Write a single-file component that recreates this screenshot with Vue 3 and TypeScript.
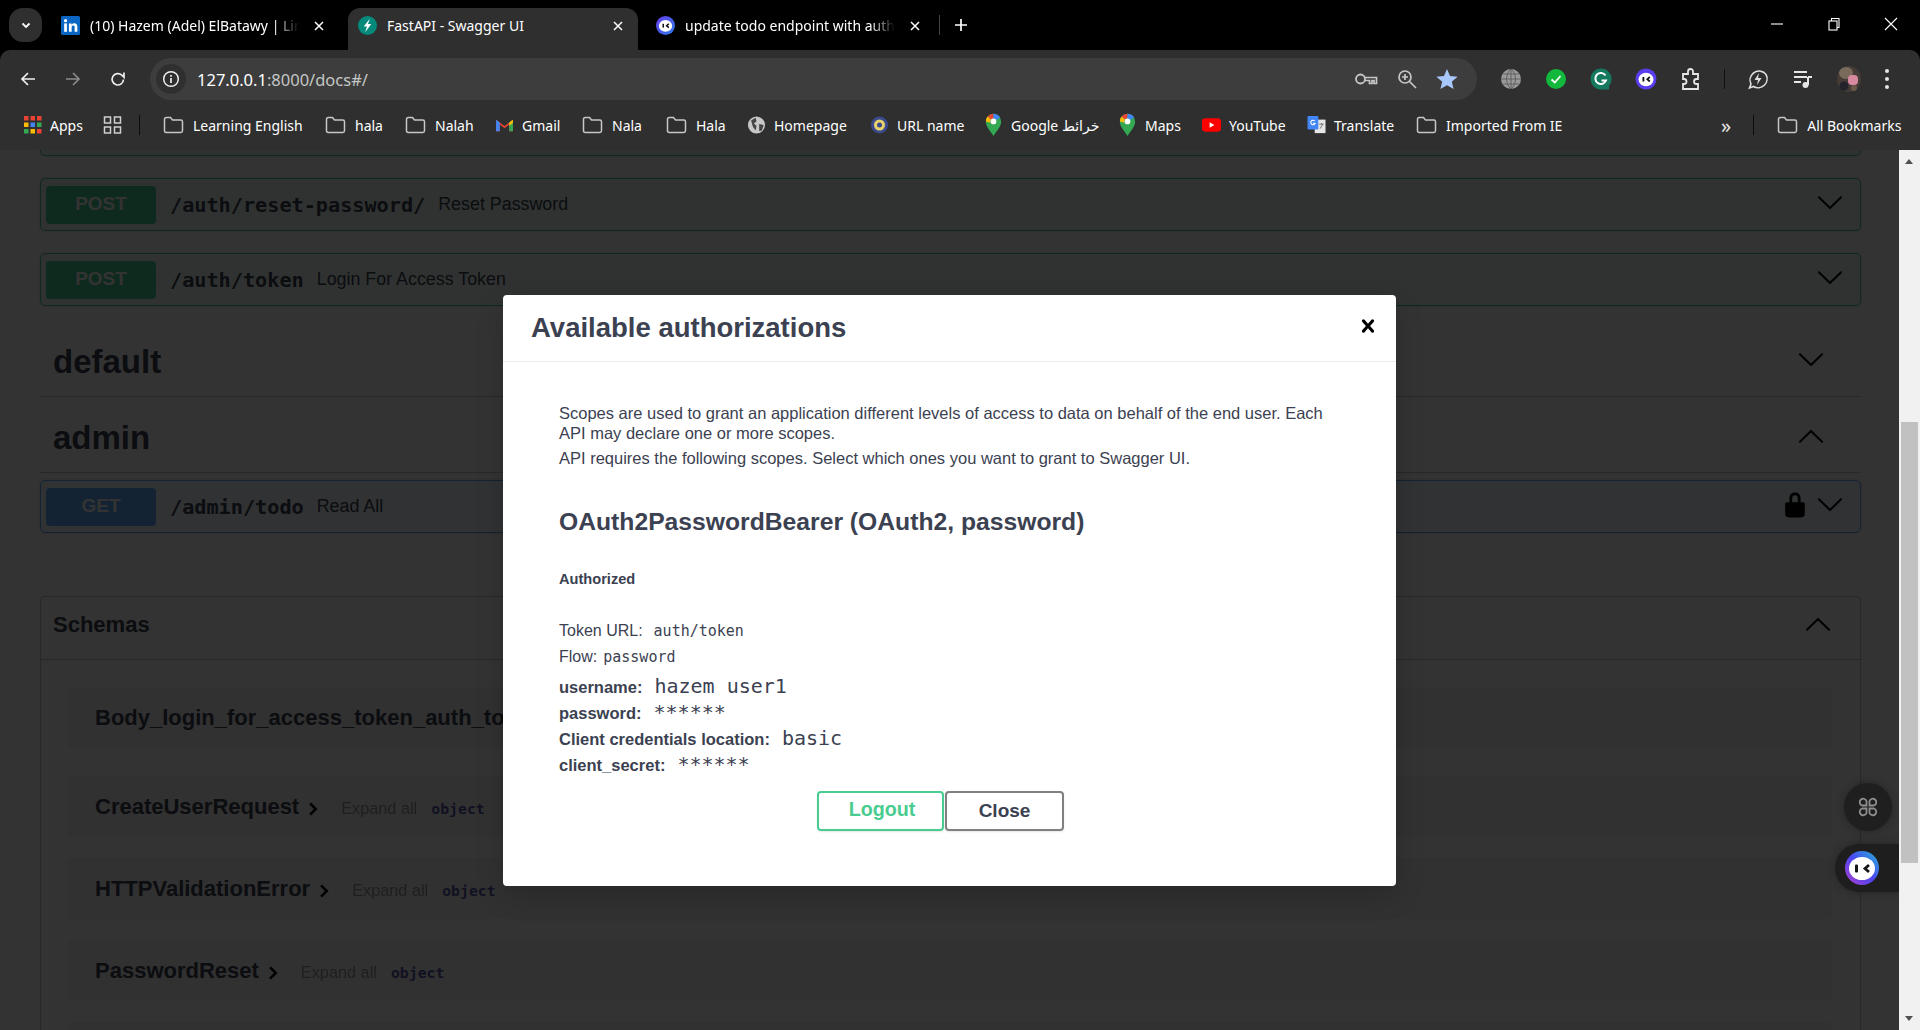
<template>
  <div class="window">
    <!-- tab strip -->
    <div class="tabstrip">
      <button class="tab-search">
        <svg width="12" height="12" viewBox="0 0 12 12"><path d="M2.500 4.500 6 8l3.500-3.500" fill="none" stroke="#fff" stroke-width="1.800" /></svg>
      </button>
      <div class="tab">
        <svg class="favicon" viewBox="0 0 18 18"><rect width="18" height="18" rx="1.500" fill="#0a66c2" /><rect x="3" y="7" width="2.600" height="8" fill="#fff" /><circle cx="4.300" cy="4.400" r="1.500" fill="#fff" /><path d="M7.500 7H10v1.200c.5-.8 1.400-1.400 2.600-1.400 2 0 2.900 1.200 2.900 3.300V15h-2.600v-4.400c0-1-.4-1.600-1.300-1.600-1 0-1.500.7-1.500 1.700V15H7.500z" fill="#fff" /></svg>
        <span class="tab-title">(10) Hazem (Adel) ElBatawy | LinkedIn</span>
        <svg class="tab-x" viewBox="0 0 12 12"><path d="M2 2l8 8M10 2l-8 8" stroke="#fff" stroke-width="1.500" /></svg>
      </div>
      <div class="tab active">
        <svg class="favicon" viewBox="0 0 20 20"><circle cx="10" cy="10" r="10" fill="#05897a" /><path d="M12.500 3 6 11h3.400L7.500 17l6.500-8.500h-3.500z" fill="#fff" /></svg>
        <span class="tab-title">FastAPI - Swagger UI</span>
        <svg class="tab-x" viewBox="0 0 12 12"><path d="M2 2l8 8M10 2l-8 8" stroke="#fff" stroke-width="1.500" /></svg>
      </div>
      <div class="tab">
        <svg class="favicon" viewBox="0 0 20 20"><defs><linearGradient id="nalaTab" x1="0" y1="0" x2="1" y2="1"><stop offset="0" stop-color="#6a3df0" /><stop offset="1" stop-color="#2a7be8" /></linearGradient></defs><circle cx="10" cy="10" r="10" fill="url(#nalaTab)" /><ellipse cx="10" cy="10.400" rx="7" ry="6.200" fill="#fff" /><rect x="6.800" y="8.200" width="1.600" height="4" fill="#111" /><path d="M13.500 8.200 11.200 10.200l2.300 2" fill="none" stroke="#111" stroke-width="1.600" /></svg>
        <span class="tab-title">update todo endpoint with authentication</span>
        <svg class="tab-x" viewBox="0 0 12 12"><path d="M2 2l8 8M10 2l-8 8" stroke="#fff" stroke-width="1.500" /></svg>
      </div>
      <span class="tab-sep"></span>
      <svg class="new-tab" viewBox="0 0 14 14"><path d="M7 1v12M1 7h12" stroke="#fff" stroke-width="1.700" /></svg>
      <div class="win-controls">
        <svg viewBox="0 0 14 14"><path d="M1 7h12" stroke="#fff" stroke-width="1.100" /></svg>
        <svg viewBox="0 0 14 14"><rect x="2" y="4" width="8" height="9" fill="none" stroke="#fff" stroke-width="1.100" /><path d="M4.500 4V1.500H12V10.500H10" fill="none" stroke="#fff" stroke-width="1.100" /></svg>
        <svg viewBox="0 0 14 14"><path d="M1 1l12 12M13 1 1 13" stroke="#fff" stroke-width="1.100" /></svg>
      </div>
    </div>

    <!-- address bar -->
    <div class="toolbar">
      <div class="nav-btns">
        <svg viewBox="0 0 18 18"><path d="M16 9H3M9 3 3 9l6 6" fill="none" stroke="#eee" stroke-width="1.700" /></svg>
        <svg viewBox="0 0 18 18"><path d="M2 9h13M9 3l6 6-6 6" fill="none" stroke="#8a8a8a" stroke-width="1.700" /></svg>
        <svg viewBox="0 0 18 18"><path d="M14.500 9.500a5.700 5.700 0 1 1-1.700-4.300L15 7.300V2.500" fill="none" stroke="#eee" stroke-width="1.700" /></svg>
      </div>
      <div class="omnibox">
        <span class="info-chip">
          <svg viewBox="0 0 18 18" width="18" height="18"><circle cx="9" cy="9" r="7.300" fill="none" stroke="#eee" stroke-width="1.500" /><path d="M9 8v5M9 5v1.700" stroke="#eee" stroke-width="1.700" /></svg>
        </span>
        <span class="url"><b>127.0.0.1</b>:8000/docs#/</span>
        <div class="omni-icons">
          <svg viewBox="0 0 24 18" width="24" height="18"><circle cx="6.500" cy="9" r="4.500" fill="none" stroke="#c7c7c7" stroke-width="1.800" /><path d="M11 7.500h11.500v6H20v-3h-2v3h-2.500v-3H11" fill="none" stroke="#c7c7c7" stroke-width="1.700" /></svg>
          <svg viewBox="0 0 20 20" width="20" height="20"><circle cx="8" cy="8" r="6" fill="none" stroke="#c7c7c7" stroke-width="1.700" /><path d="M12.500 12.500 19 19M5 8h6M8 5v6" stroke="#c7c7c7" stroke-width="1.700" /></svg>
          <svg viewBox="0 0 22 22" width="22" height="22"><path d="M11 1l3 7.100 7.600.6-5.800 5 1.800 7.400L11 17.200 4.400 21.100l1.800-7.400-5.800-5L8 8.100z" fill="#a8c7fa" /></svg>
        </div>
      </div>
      <div class="ext-icons">
        <svg viewBox="0 0 22 22"><circle cx="11" cy="11" r="10" fill="#9a9a9a" /><path d="M1 11h20M11 1v20M3 6h16M3 16h16M11 1c-6 5-6 15 0 20M11 1c6 5 6 15 0 20" fill="none" stroke="#555" stroke-width=".8" /></svg>
        <svg viewBox="0 0 22 22"><circle cx="11" cy="11" r="10" fill="#12b83c" /><path d="M6.500 11.500 9.800 14.500 15.500 8" fill="none" stroke="#fff" stroke-width="1.800" /></svg>
        <svg viewBox="0 0 22 22"><path d="M11 .5a10.500 10.500 0 0 1 8 17.300V21.500H11A10.500 10.500 0 0 1 11 .5z" fill="#15795f" /><path d="M15.500 7.500a5.500 5.500 0 1 0 .5 5H11.500" fill="none" stroke="#fff" stroke-width="2" /></svg>
        <svg viewBox="0 0 22 22"><circle cx="11" cy="11" r="10.500" fill="#5b3df0" /><ellipse cx="11" cy="11.500" rx="7.500" ry="6.800" fill="#fff" /><rect x="7.500" y="9" width="1.800" height="4.500" fill="#111" /><path d="M14.800 9 12.300 11.200l2.500 2.300" fill="none" stroke="#111" stroke-width="1.700" /></svg>
        <svg viewBox="0 0 22 22"><path d="M3 6h5V3.500a2.500 2.500 0 0 1 5 0V6h5v5h-1.500a2.500 2.500 0 0 0 0 5H18v5H3v-5h1a2.500 2.500 0 0 0 0-5H3z" fill="none" stroke="#e6e6e6" stroke-width="1.800" /></svg>
        <span class="ext-sep"></span>
        <svg viewBox="0 0 22 22"><path d="M17 4.500A9 9 0 0 0 4 16l-1.500 4 4-1.500A9 9 0 0 0 19 6.500z" fill="none" stroke="#e0e0e0" stroke-width="1.600" /><path d="M12 5 7.500 12h3.500l-1 5 4.500-7H11z" fill="#e0e0e0" /></svg>
        <svg viewBox="0 0 22 22"><path d="M2 4h13M2 9h13M2 14h7" stroke="#e6e6e6" stroke-width="2" /><path d="M16 9v8" stroke="#e6e6e6" stroke-width="2" /><circle cx="13.500" cy="17" r="3" fill="#e6e6e6" /><path d="M16 9h4" stroke="#e6e6e6" stroke-width="2" /></svg>
        <svg class="avatar" viewBox="0 0 24 26"><ellipse cx="12" cy="13" rx="12" ry="13" fill="#453c38" /><ellipse cx="9" cy="7" rx="7" ry="6" fill="#7a6a5c" /><rect x="11" y="9" width="10" height="10" rx="4" fill="#d98aa0" /><circle cx="7" cy="20" r="4.500" fill="#23232b" /><circle cx="17" cy="22" r="3" fill="#6b5a4c" /></svg>
        <svg class="dots" viewBox="0 0 6 22"><circle cx="3" cy="3" r="2" fill="#e6e6e6" /><circle cx="3" cy="11" r="2" fill="#e6e6e6" /><circle cx="3" cy="19" r="2" fill="#e6e6e6" /></svg>
      </div>
    </div>

    <!-- bookmarks -->
    <div class="bookmarks">
      <div v-for="b in bookmarks" :key="b.label" class="bookmark" :class="b.icon" :style="{ width: b.w + 'px' }">
        <svg v-if="b.icon === 'folder'" class="bm-icon" viewBox="0 0 20 18"><path d="M1 3.200Q1 1.500 2.700 1.500H7l2 2.500h8.300Q19 4 19 5.700v9.100q0 1.700-1.700 1.700H2.700Q1 16.500 1 14.800z" fill="none" stroke="#c7c7c7" stroke-width="1.500" /></svg>
        <svg v-else-if="b.icon === 'apps'" class="bm-icon" viewBox="0 0 18 18"><g v-for="(c, i) in appColors" :key="i"><rect :x="(i % 3) * 6.500" :y="Math.floor(i / 3) * 6.500" width="4.500" height="4.500" :fill="c" /></g></svg>
        <svg v-else-if="b.icon === 'gmail'" class="bm-icon" viewBox="0 0 18 14"><path d="M1 13V2l8 6 8-6v11h-3.500V6.500L9 10 4.500 6.500V13z" fill="#ea4335" /><path d="M1 13V2l3.500 2.600V13z" fill="#4285f4" /><path d="M17 13V2l-3.500 2.600V13z" fill="#34a853" /><path d="M13.500 4.600 17 2v3l-3.500 2.600z" fill="#fbbc04" /></svg>
        <svg v-else-if="b.icon === 'globe'" class="bm-icon" viewBox="0 0 20 20"><circle cx="10" cy="10" r="9.500" fill="#c7c7c7" /><path d="M4 5l5-3 1 4-3 2 3 3-1 5-3-4zM13 9l5 1-2 6-3 1z" fill="#444" /></svg>
        <svg v-else-if="b.icon === 'seal'" class="bm-icon" viewBox="0 0 18 18"><circle cx="9" cy="9" r="8.500" fill="#3b4a8c" /><circle cx="9" cy="9" r="5.500" fill="#e8d26a" /><circle cx="9" cy="9" r="2.500" fill="#3b4a8c" /></svg>
        <svg v-else-if="b.icon === 'maps'" class="bm-icon" viewBox="0 0 16 22"><path d="M8 21C5 16 1 12.500 1 7.700a7 7 0 0 1 14 0C15 12.500 11 16 8 21z" fill="#34a853" /><path d="M2.500 3.300A7 7 0 0 1 8 .7V5a3 3 0 0 0-2.300 1z" fill="#ea4335" /><path d="M8 .7a7 7 0 0 1 6 3.400L10.500 6.500A3 3 0 0 0 8 5z" fill="#4285f4" /><path d="M1 7.700a7 7 0 0 1 1.500-4.400l3.200 2.700a3 3 0 0 0-.6 3z" fill="#fbbc04" /><circle cx="8" cy="7.700" r="2.600" fill="#fff" /></svg>
        <svg v-else-if="b.icon === 'youtube'" class="bm-icon" viewBox="0 0 20 14"><rect width="20" height="14" rx="3.500" fill="#f00" /><path d="M8 4l5 3-5 3z" fill="#fff" /></svg>
        <svg v-else-if="b.icon === 'translate'" class="bm-icon" viewBox="0 0 20 20"><rect x="8" y="4" width="12" height="15" fill="#e6e6e6" /><rect y="0" width="12" height="15" rx="1" fill="#4285f4" /><path d="M8 5.500a2.500 2.500 0 1 0 .5 2.500H6" fill="none" stroke="#fff" stroke-width="1.200" /><path d="M13 9h5M15.500 8v1M14 14l3-5" stroke="#666" stroke-width="1" /></svg>
        <svg v-else-if="b.icon === 'grid'" class="bm-icon" viewBox="0 0 18 18"><g fill="none" stroke="#d0d0d0" stroke-width="1.500"><rect x="1" y="1" width="6" height="6" /><rect x="11" y="1" width="6" height="6" /><rect x="1" y="11" width="6" height="6" /><rect x="11" y="11" width="6" height="6" /></g></svg>
        <span v-if="b.text" class="bm-text">{{ b.text }}</span>
        <span v-if="b.sep" class="bm-sep"></span>
      </div>
      <span class="bm-more">»</span>
      <span class="bm-sep end"></span>
      <div class="bookmark folder">
        <svg class="bm-icon" viewBox="0 0 20 18"><path d="M1 3.200Q1 1.500 2.700 1.500H7l2 2.500h8.300Q19 4 19 5.700v9.100q0 1.700-1.700 1.700H2.700Q1 16.500 1 14.800z" fill="none" stroke="#c7c7c7" stroke-width="1.500" /></svg>
        <span class="bm-text">All Bookmarks</span>
      </div>
    </div>

    <div class="viewport">
      <!-- swagger page behind the dialog -->
      <div class="page">
        <div class="docs">
          <div v-for="op in authOps" :key="op.path" class="opblock post">
            <span class="method">POST</span>
            <span class="path">{{ op.path }}</span>
            <span class="summary">{{ op.summary }}</span>
            <svg class="chev op-chev" viewBox="0 0 20 20"><path :d="chevronDown" /></svg>
          </div>

          <div class="tag first-tag">
            <h3>default</h3>
            <svg class="chev" viewBox="0 0 20 20"><path :d="chevronDown" /></svg>
          </div>
          <div class="tag second-tag">
            <h3>admin</h3>
            <svg class="chev up" viewBox="0 0 20 20"><path :d="chevronDown" /></svg>
          </div>

          <div class="opblock get">
            <span class="method">GET</span>
            <span class="path">/admin/todo</span>
            <span class="summary">Read All</span>
            <svg class="lock" viewBox="0 0 20 20"><path d="M15.800 8H14V5.600C14 2.703 12.665 1 10 1 7.334 1 6 2.703 6 5.600V8H4c-.553 0-1 .646-1 1.199V17c0 .549.428 1.139.951 1.307l1.197.387C5.672 18.861 6.550 19 7.100 19h5.800c.549 0 1.428-.139 1.951-.307l1.196-.387c.524-.167.953-.757.953-1.306V9.199C17 8.646 16.352 8 15.800 8zM12 8H8V5.199C8 3.754 8.797 3 10 3c1.203 0 2 .754 2 2.199V8z" /></svg>
            <svg class="chev op-chev" viewBox="0 0 20 20"><path :d="chevronDown" /></svg>
          </div>

          <section class="schemas">
            <header>
              <h4>Schemas</h4>
              <svg class="chev up" viewBox="0 0 20 20"><path :d="chevronDown" /></svg>
            </header>
            <div class="schema-list">
              <div v-for="s in schemas" :key="s.name" class="schema">
                <span class="schema-name">{{ s.name }}</span>
                <template v-if="s.arrow">
                  <svg class="schema-arrow" viewBox="0 0 10 14"><path d="M2 2l5 5-5 5" fill="none" stroke="#000" stroke-width="2.200" /></svg>
                  <span class="expand">Expand all</span>
                  <span class="type">object</span>
                </template>
              </div>
            </div>
          </section>
        </div>

        <div class="backdrop">
          <div class="dialog">
            <div class="dialog-head">
              <h3>Available authorizations</h3>
              <svg class="dialog-x" viewBox="0 0 20 20"><path d="M14.348 14.849a1.200 1.200 0 0 1-1.697 0L10 11.819l-2.651 3.029a1.200 1.200 0 1 1-1.697-1.697l2.758-3.150-2.759-3.152a1.200 1.200 0 1 1 1.697-1.697L10 8.183l2.651-3.031a1.200 1.200 0 1 1 1.697 1.697l-2.758 3.152 2.758 3.150a1.200 1.200 0 0 1 0 1.698z" /></svg>
            </div>
            <div class="dialog-body">
              <p class="desc">Scopes are used to grant an application different levels of access to data on behalf of the end user. Each API may declare one or more scopes.</p>
              <p class="desc second">API requires the following scopes. Select which ones you want to grant to Swagger UI.</p>
              <h4 class="scheme">OAuth2PasswordBearer (OAuth2, password)</h4>
              <h6 class="authorized">Authorized</h6>
              <p class="meta first">Token URL:<code>auth/token</code></p>
              <p class="meta">Flow:<code class="flow">password</code></p>
              <div class="creds">
                <p v-for="c in creds" :key="c.label" class="cred">
                  <label>{{ c.label }}</label><code>{{ c.value }}</code>
                </p>
              </div>
              <div class="actions">
                <button class="btn logout">Logout</button>
                <button class="btn close">Close</button>
              </div>
            </div>
          </div>
        </div>

        <!-- extension widgets floating over the page -->
        <div class="float-cmd">
          <svg viewBox="0 0 22 22" width="22" height="22"><g fill="none" stroke="#8f8f8f" stroke-width="1.800"><path d="M9.500 9.500H5a3.500 3.500 0 1 1 4.500-4.500z" /><path d="M12.500 9.500H17a3.500 3.500 0 1 0-4.500-4.500z" /><path d="M9.500 12.500H5a3.500 3.500 0 1 0 4.500 4.500z" /><path d="M12.500 12.500H17a3.500 3.500 0 1 1-4.500 4.500z" /></g></svg>
        </div>
        <div class="float-nala">
          <svg viewBox="0 0 34 34" width="34" height="34"><defs><linearGradient id="nalaRing" x1="0" y1="1" x2="1" y2="0"><stop offset="0" stop-color="#b23fd0" /><stop offset=".5" stop-color="#4a45f0" /><stop offset="1" stop-color="#25b8d8" /></linearGradient></defs><circle cx="17" cy="17" r="17" fill="url(#nalaRing)" /><ellipse cx="17" cy="17.500" rx="13" ry="11.500" fill="#fff" /><rect x="10" y="13.500" width="3" height="8" rx="1" fill="#151515" /><path d="M24 14l-4 3.500 4 3.500" fill="none" stroke="#151515" stroke-width="2.800" /></svg>
        </div>
      </div>

      <!-- page scrollbar -->
      <div class="scrollbar">
        <span class="arrow-up"></span>
        <span class="thumb"></span>
        <span class="arrow-down"></span>
      </div>
    </div>
  </div>
</template>

<script setup lang="ts">
interface Bookmark {
  label: string;
  icon: string;
  text?: string;
  w: number;
  sep?: boolean;
}

// distance from the start of one bookmark to the start of the next
const bookmarks: Bookmark[] = [
  { label: 'apps', icon: 'apps', text: 'Apps', w: 79 },
  { label: 'grid', icon: 'grid', w: 60, sep: true },
  { label: 'learning', icon: 'folder', text: 'Learning English', w: 162 },
  { label: 'hala1', icon: 'folder', text: 'hala', w: 80 },
  { label: 'nalah', icon: 'folder', text: 'Nalah', w: 90 },
  { label: 'gmail', icon: 'gmail', text: 'Gmail', w: 87 },
  { label: 'nala', icon: 'folder', text: 'Nala', w: 84 },
  { label: 'hala2', icon: 'folder', text: 'Hala', w: 81 },
  { label: 'homepage', icon: 'globe', text: 'Homepage', w: 123 },
  { label: 'url', icon: 'seal', text: 'URL name', w: 114 },
  { label: 'google', icon: 'maps', text: 'Google خرائط', w: 134 },
  { label: 'maps', icon: 'maps', text: 'Maps', w: 84 },
  { label: 'youtube', icon: 'youtube', text: 'YouTube', w: 105 },
  { label: 'translate', icon: 'translate', text: 'Translate', w: 109 },
  { label: 'ie', icon: 'folder', text: 'Imported From IE', w: 305 },
];

const appColors = ['#ea4335', '#ea4335', '#ea4335', '#fbbc04', '#4285f4', '#34a853', '#34a853', '#fbbc04', '#ea4335'];

const chevronDown =
  'M17.418 6.109c.272-.268.709-.268.979 0s.271.701 0 .969l-7.908 7.830c-.27.268-.707.268-.979 0l-7.908-7.830c-.27-.268-.27-.701 0-.969.271-.268.709-.268.979 0L10 13.250l7.418-7.141z';

const authOps = [
  { path: '/auth/', summary: 'Create User' },
  { path: '/auth/reset-password/', summary: 'Reset Password' },
  { path: '/auth/token', summary: 'Login For Access Token' },
];

const schemas = [
  { name: 'Body_login_for_access_token_auth_token_post', arrow: false },
  { name: 'CreateUserRequest', arrow: true },
  { name: 'HTTPValidationError', arrow: true },
  { name: 'PasswordReset', arrow: true },
  { name: 'TodoRequest', arrow: true },
];

const creds = [
  { label: 'username:', value: 'hazem user1' },
  { label: 'password:', value: '******' },
  { label: 'Client credentials location:', value: 'basic' },
  { label: 'client_secret:', value: '******' },
];
</script>

<style scoped>
.window {
  width: 1920px;
  height: 1030px;
  overflow: hidden;
  background: #000;
  display: flex;
  flex-direction: column;
  font-family: "Liberation Sans", Arial, sans-serif;
}

.tabstrip {
  height: 50px;
  flex: none;
  display: flex;
  align-items: flex-start;
  padding-left: 9px;
  background: #000;
}
.tab-search {
  width: 33px;
  height: 34px;
  margin-top: 8px;
  border: none;
  border-radius: 14px;
  background: #2f2f2f;
  display: flex;
  align-items: center;
  justify-content: center;
  padding: 0;
  margin-right: 9px;
}
.tab {
  width: 297px;
  height: 42px;
  margin-top: 8px;
  display: flex;
  align-items: center;
  padding: 0 23px 7px 10px;
  box-sizing: border-box;
  color: #fff;
  font: 14px "Noto Sans", "Open Sans", sans-serif;
}
.tab.active {
  width: 290px;
  background: #2f2f2f;
  border-radius: 12px 12px 0 0;
  padding-right: 14px;
}
.tab:nth-child(4) {
  width: 299px;
  padding-left: 18px;
  padding-right: 16px;
}
.favicon {
  width: 19px;
  height: 19px;
  flex: none;
  margin-right: 10px;
}
.tab-title {
  flex: 1;
  white-space: nowrap;
  overflow: hidden;
  -webkit-mask-image: linear-gradient(90deg, #000 88%, transparent);
  mask-image: linear-gradient(90deg, #000 88%, transparent);
}
.active .tab-title {
  -webkit-mask-image: none;
  mask-image: none;
}
.tab-x {
  width: 12px;
  height: 12px;
  flex: none;
  margin-left: 14px;
}
.tab-sep {
  width: 1px;
  height: 20px;
  margin: 15px 0 0 2px;
  background: #444;
}
.new-tab {
  width: 14px;
  height: 14px;
  margin: 18px 0 0 14px;
}
.win-controls {
  margin-left: auto;
  display: flex;
  gap: 43px;
  padding: 17px 22px 0 0;
}
.win-controls svg {
  width: 14px;
  height: 14px;
}

.toolbar {
  height: 55px;
  flex: none;
  background: #2f2f2f;
  border-radius: 10px 10px 0 0;
  display: flex;
  align-items: flex-start;
  padding: 8px 0 0 19px;
  box-sizing: border-box;
}
.nav-btns {
  display: flex;
  gap: 27px;
  padding-top: 12px;
  width: 131px;
  flex: none;
}
.nav-btns svg {
  width: 18px;
  height: 18px;
}
.omnibox {
  width: 1327px;
  height: 42px;
  flex: none;
  background: #3d3d3d;
  border-radius: 21px;
  display: flex;
  align-items: center;
  padding-left: 6px;
  box-sizing: border-box;
}
.info-chip {
  width: 30px;
  height: 30px;
  border-radius: 50%;
  background: #2f2f2f;
  display: flex;
  align-items: center;
  justify-content: center;
}
.url {
  margin-left: 11px;
  color: #c4c7c5;
  font: 16.500px "Noto Sans", "Open Sans", sans-serif;
}
.url b {
  color: #fff;
  font-weight: 400;
}
.omni-icons {
  margin-left: auto;
  display: flex;
  align-items: center;
  gap: 19px;
  padding-right: 19px;
}
.ext-icons {
  display: flex;
  align-items: center;
  height: 42px;
  padding-left: 23px;
  gap: 23px;
}
.ext-icons svg {
  width: 22px;
  height: 22px;
  flex: none;
}
.ext-icons .avatar {
  width: 24px;
  height: 26px;
}
.ext-icons .dots {
  width: 6px;
  height: 22px;
}
.ext-sep {
  width: 1px;
  height: 20px;
  background: #111;
  margin: 0 -1px;
}

.bookmarks {
  height: 45px;
  flex: none;
  box-sizing: border-box;
  padding: 0 0 5px 24px;
  background: #2f2f2f;
  display: flex;
  align-items: center;
}
.bookmark {
  display: flex;
  align-items: center;
  flex: none;
  gap: 8px;
  color: #fff;
  font: 14px "Noto Sans", "DejaVu Sans", sans-serif;
  white-space: nowrap;
  height: 28px;
}
.bm-icon {
  width: 19px;
  height: 18px;
  flex: none;
}
.bookmark.folder {
  gap: 9px;
}
.folder .bm-icon {
  width: 21px;
}
.apps .bm-icon {
  width: 18px;
}
.maps .bm-icon {
  height: 24px;
}
.bm-sep {
  width: 1px;
  height: 20px;
  background: #0c0c0c;
  margin-left: 9px;
  flex: none;
}
.bm-sep.end {
  margin: 0 23px 0 22px;
}
.bm-more {
  color: #e6e6e6;
  font: 20px "Noto Sans", sans-serif;
}

.viewport {
  flex: 1;
  display: flex;
  min-height: 0;
}
.page {
  position: relative;
  width: 1899px;
  flex: none;
  background: #fff;
  overflow: hidden;
}
.docs {
  margin: -47px 0 0 40px;
  width: 1821px;
  color: #3b4151;
}
.opblock {
  height: 53px;
  box-sizing: border-box;
  margin-bottom: 22px;
  border: 1px solid;
  border-radius: 5px;
  display: flex;
  align-items: center;
  padding-left: 5px;
  box-shadow: 0 0 3px rgba(0, 0, 0, 0.19);
}
.opblock.post {
  border-color: #49cc90;
  background: rgba(73, 204, 144, 0.1);
}
.opblock.get {
  border-color: #61affe;
  background: rgba(97, 175, 254, 0.1);
  margin-bottom: 0;
}
.method {
  width: 110px;
  height: 38px;
  flex: none;
  border-radius: 4px;
  text-align: center;
  line-height: 36px;
  font-size: 19px;
  font-weight: 700;
  color: #fff;
}
.post .method {
  background: #49cc90;
}
.get .method {
  background: #61affe;
}
.path {
  margin-left: 14px;
  font: 700 20.200px "DejaVu Sans Mono", "Liberation Mono", monospace;
}
.summary {
  margin-left: 13px;
  font-size: 17.850px;
}
.chev {
  width: 28px;
  height: 28px;
  flex: none;
  fill: #000;
}
.chev.up {
  transform: rotate(180deg);
}
.op-chev {
  margin: -5px 16px 0 7px;
}
.opblock > .chev:nth-child(4) {
  margin-left: auto;
}
.lock {
  width: 28px;
  height: 28px;
  margin: -4px 0 0 auto;
  fill: #000;
  flex: none;
}
.tag {
  height: 75px;
  display: flex;
  align-items: center;
  justify-content: space-between;
  padding: 0 36px 0 13px;
  border-bottom: 1px solid rgba(59, 65, 81, 0.3);
  box-sizing: border-box;
}
.second-tag {
  height: 76px;
  margin-bottom: 7px;
  padding-top: 6px;
}
.second-tag .chev {
  margin-top: -2px;
}
.first-tag {
  height: 91px;
  margin-top: -22px;
  padding-top: 22px;
}
.first-tag .chev {
  margin-top: -7px;
}
.tag h3 {
  margin: 0;
  font-size: 33px;
  font-weight: 700;
}
.schemas {
  margin-top: 63px;
  border: 1px solid rgba(59, 65, 81, 0.3);
  border-radius: 4px;
  height: 600px;
}
.schemas header {
  height: 63px;
  display: flex;
  align-items: center;
  justify-content: space-between;
  padding: 0 28px 6px 12px;
  border-bottom: 1px solid rgba(59, 65, 81, 0.3);
  box-sizing: border-box;
}
.schemas h4 {
  margin: 0;
  font-size: 22px;
  font-weight: 700;
}
.schema-list {
  padding: 27px 28px 0 27px;
  display: flex;
  flex-direction: column;
  gap: 21px;
}
.schema {
  height: 61px;
  flex: none;
  background: rgba(0, 0, 0, 0.05);
  border-radius: 4px;
  display: flex;
  align-items: center;
  padding-left: 27px;
}
.schema:first-child {
  margin-bottom: 7px;
}
.schema-name {
  font-size: 22px;
  font-weight: 700;
}
.schema-arrow {
  width: 13px;
  height: 16px;
  margin: 0 0 0 8px;
  position: relative;
  top: 2px;
}
.expand {
  margin-left: 21px;
  font-size: 16.300px;
  color: #3b4151;
  opacity: 0.5;
  position: relative;
  top: 2px;
}
.type {
  margin-left: 14px;
  font: 700 14.800px "DejaVu Sans Mono", "Liberation Mono", monospace;
  color: #55a;
  position: relative;
  top: 2px;
}

.backdrop {
  position: absolute;
  inset: 0;
  background: rgba(0, 0, 0, 0.8);
  display: flex;
  align-items: center;
  justify-content: center;
}
.dialog {
  width: 893px;
  height: 591px;
  background: #fff;
  border-radius: 4px;
  color: #3b4151;
  box-shadow: 0 10px 30px -2px rgba(0, 0, 0, 0.2);
}
.dialog-head {
  height: 67px;
  box-sizing: border-box;
  border-bottom: 1px solid #ebebeb;
  display: flex;
  align-items: center;
  justify-content: space-between;
  padding: 0 15px 0 28px;
}
.dialog-head h3 {
  margin: 0;
  font-size: 27.500px;
  font-weight: 700;
}
.dialog-x {
  width: 26px;
  height: 26px;
  margin-top: -4px;
  fill: #000;
}
.dialog-body {
  padding: 41px 74px 0 56px;
}
.desc {
  margin: 0 -20px 0 0;
  font-size: 16.500px;
  line-height: 20px;
}
.desc.second {
  margin-top: 5px;
}
.scheme {
  margin: 39px 0 0;
  font-size: 24.700px;
  line-height: 30px;
  font-weight: 700;
}
.authorized {
  margin: 32px 0 0;
  font-size: 14.600px;
  line-height: 20px;
  font-weight: 700;
}
.meta {
  margin: 6px 0 0;
  font-size: 16px;
  line-height: 20px;
}
.meta.first {
  margin-top: 32px;
}
.meta code {
  margin-left: 11px;
  font: 15px "DejaVu Sans Mono", "Liberation Mono", monospace;
}
.meta code.flow {
  margin-left: 6px;
}
.creds {
  margin-top: 10px;
  display: flex;
  flex-direction: column;
  gap: 6px;
}
.cred {
  margin: 0;
  height: 20px;
  line-height: 20px;
  white-space: nowrap;
}
.cred label {
  font-size: 16.500px;
  font-weight: 700;
  position: relative;
  top: -1px;
}
.cred code {
  margin-left: 12px;
  font: 20px/20px "DejaVu Sans Mono", "Liberation Mono", monospace;
  position: relative;
  top: -1px;
}
.actions {
  margin-top: 16px;
  display: flex;
  justify-content: center;
  gap: 1px;
}
.btn {
  height: 40px;
  background: transparent;
  border: 2px solid;
  border-radius: 4px;
  font: 700 19px "Liberation Sans", Arial, sans-serif;
  box-shadow: 0 1px 2px rgba(0, 0, 0, 0.1);
  padding: 0;
}
.logout {
  width: 127px;
  padding: 0 0 2px 3px;
  font-size: 19.700px;
  border-color: #49cc90;
  color: #49cc90;
}
.close {
  width: 119px;
  border-color: #808080;
  color: #3b4151;
}

.float-cmd {
  position: absolute;
  right: 7px;
  top: 633px;
  width: 48px;
  height: 48px;
  border-radius: 50%;
  background: #1f1f1f;
  display: flex;
  align-items: center;
  justify-content: center;
  box-shadow: 0 0 8px rgba(0, 0, 0, 0.3);
}
.float-nala {
  position: absolute;
  right: 0;
  top: 694px;
  width: 64px;
  height: 48px;
  box-sizing: border-box;
  border-radius: 24px 0 0 24px;
  background: #1e1e1e;
  display: flex;
  align-items: center;
  padding-left: 10px;
  box-shadow: 0 0 8px rgba(0, 0, 0, 0.3);
}

.scrollbar {
  flex: 1;
  background: #f1f1f1;
  position: relative;
}
.thumb {
  position: absolute;
  top: 272px;
  left: 2px;
  width: 17px;
  height: 441px;
  background: #c1c1c1;
}
.arrow-up,
.arrow-down {
  position: absolute;
  left: 6px;
  width: 0;
  height: 0;
  border-left: 4.500px solid transparent;
  border-right: 4.500px solid transparent;
}
.arrow-up {
  top: 9px;
  border-bottom: 5px solid #505050;
}
.arrow-down {
  bottom: 9px;
  border-top: 5px solid #505050;
}
</style>

<style>
html,
body {
  margin: 0;
  overflow: hidden;
}
</style>
